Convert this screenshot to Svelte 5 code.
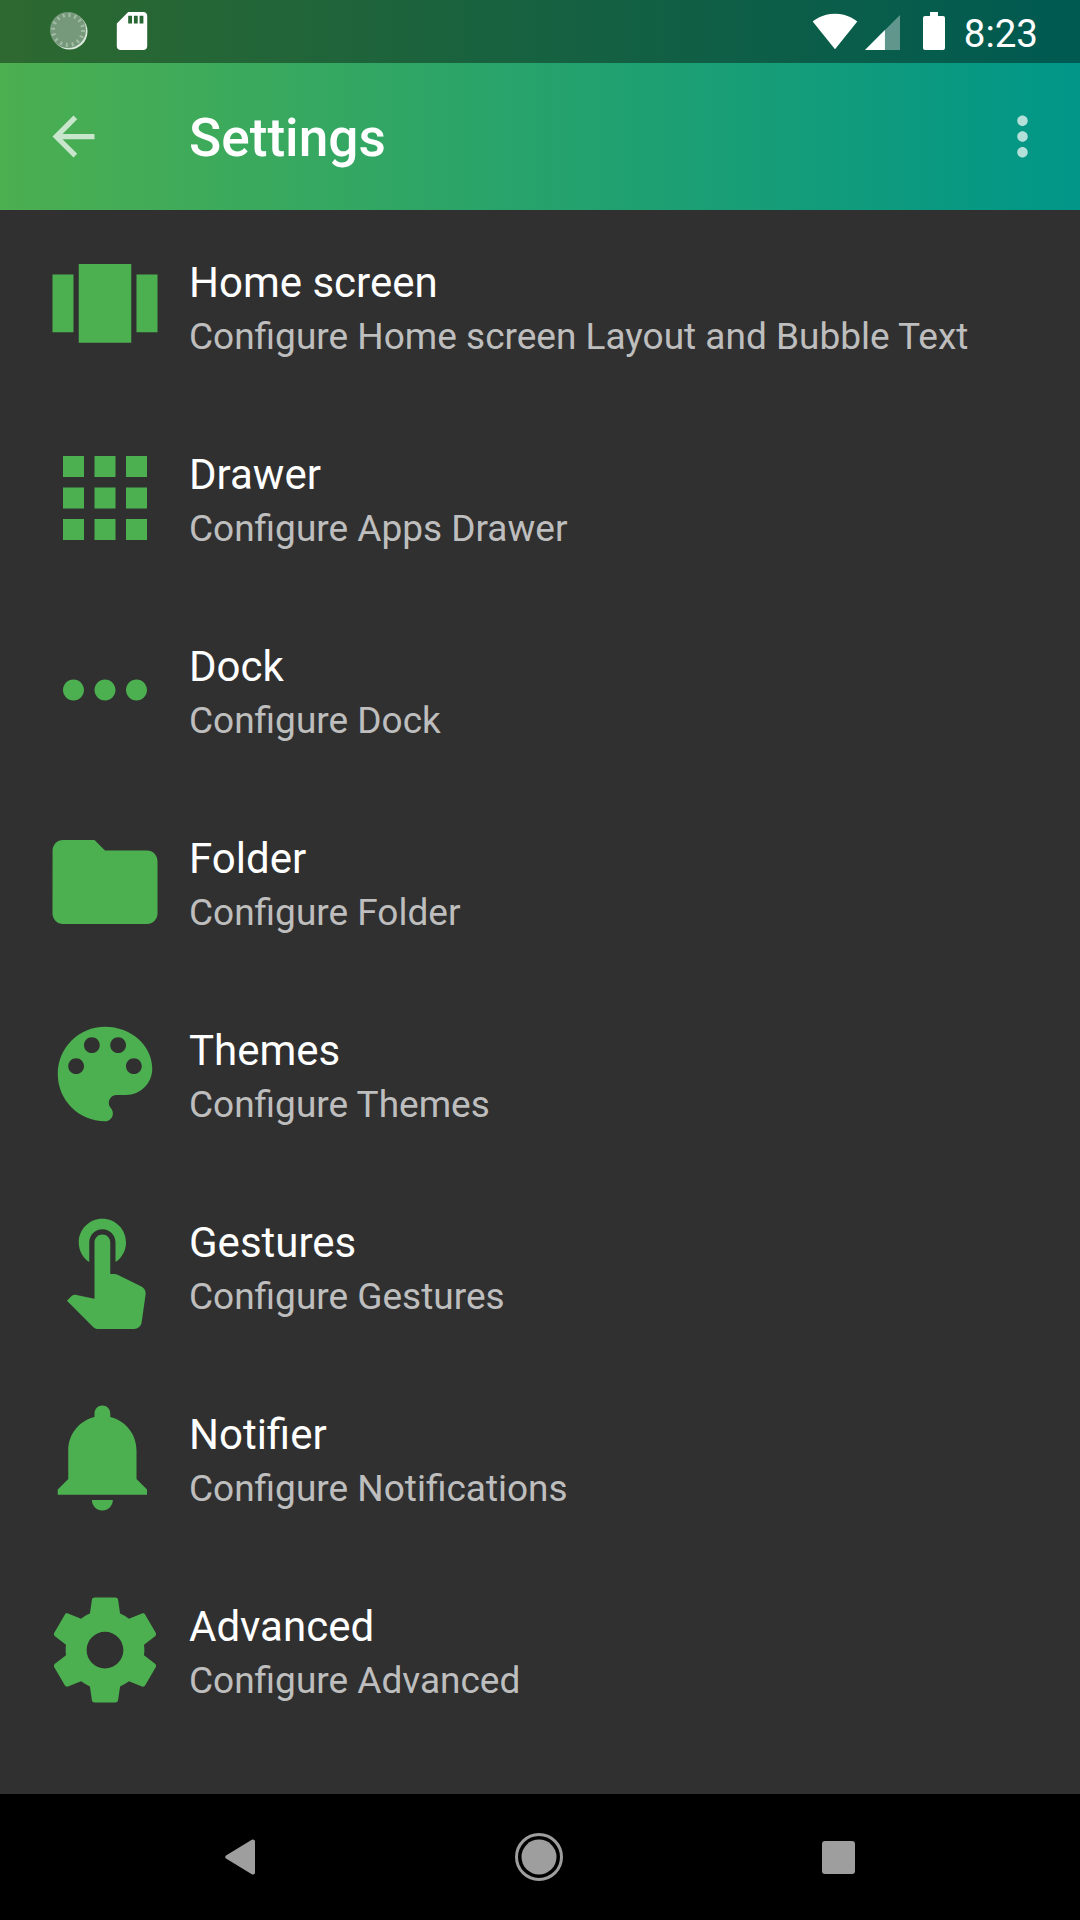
<script>
  const items = [
    { t: 'Home screen', s: 'Configure Home screen Layout and Bubble Text', d: 'M7 19h10V4H7v15zm-5-2h4V6H2v11zM18 6v11h4V6h-4z' },
    { t: 'Drawer', s: 'Configure Apps Drawer', d: 'M4 8h4V4H4v4zm6 12h4v-4h-4v4zm-6 0h4v-4H4v4zm0-6h4v-4H4v4zm6 0h4v-4h-4v4zm6-10v4h4V4h-4zm-6 4h4V4h-4v4zm6 6h4v-4h-4v4zm0 6h4v-4h-4v4z' },
    { t: 'Dock', s: 'Configure Dock', d: 'M6 10c-1.1 0-2 .9-2 2s.9 2 2 2 2-.9 2-2-.9-2-2-2zm12 0c-1.1 0-2 .9-2 2s.9 2 2 2 2-.9 2-2-.9-2-2-2zm-6 0c-1.1 0-2 .9-2 2s.9 2 2 2 2-.9 2-2-.9-2-2-2z' },
    { t: 'Folder', s: 'Configure Folder', d: 'M10 4H4c-1.1 0-1.99.9-1.99 2L2 18c0 1.1.9 2 2 2h16c1.1 0 2-.9 2-2V8c0-1.1-.9-2-2-2h-8l-2-2z' },
    { t: 'Themes', s: 'Configure Themes', d: 'M12 3c-4.97 0-9 4.03-9 9s4.03 9 9 9c.83 0 1.5-.67 1.5-1.5 0-.39-.15-.74-.39-1.01-.23-.26-.38-.61-.38-.99 0-.83.67-1.5 1.5-1.5H16c2.76 0 5-2.24 5-5 0-4.42-4.03-8-9-8zm-5.5 9c-.83 0-1.5-.67-1.5-1.5S5.67 9 6.5 9 8 9.67 8 10.5 7.33 12 6.5 12zm3-4C8.67 8 8 7.33 8 6.5S8.67 5 9.5 5s1.5.67 1.5 1.5S10.33 8 9.5 8zm5 0c-.83 0-1.5-.67-1.5-1.5S13.67 5 14.5 5s1.5.67 1.5 1.5S15.33 8 14.5 8zm3 4c-.83 0-1.5-.67-1.5-1.5S16.67 9 17.5 9s1.5.67 1.5 1.5-.67 1.5-1.5 1.5z' },
    { t: 'Gestures', s: 'Configure Gestures', d: 'M9 11.24V7.5C9 6.12 10.12 5 11.5 5S14 6.12 14 7.5v3.74c1.21-.81 2-2.18 2-3.74C16 5.01 13.99 3 11.5 3S7 5.01 7 7.5c0 1.56.79 2.93 2 3.74zm9.84 4.63l-4.54-2.26c-.17-.07-.35-.11-.54-.11H13v-6c0-.83-.67-1.5-1.5-1.5S10 6.67 10 7.5v10.74l-3.43-.72c-.08-.01-.15-.03-.24-.03-.31 0-.59.13-.79.33l-.79.8 4.94 4.94c.27.27.65.44 1.06.44h6.79c.75 0 1.33-.55 1.44-1.28l.75-5.27c.01-.07.02-.14.02-.2 0-.62-.38-1.16-.91-1.38z' },
    { t: 'Notifier', s: 'Configure Notifications', d: 'M11.5 22c1.1 0 2-.9 2-2h-4c0 1.1.9 2 2 2zm6.5-6v-5.5c0-3.07-2.13-5.64-5-6.32V3.5c0-.83-.67-1.5-1.5-1.5S10 2.67 10 3.5v.68c-2.87.68-5 3.25-5 6.32V16l-2 2v1h17v-1l-2-2z' },
    { t: 'Advanced', s: 'Configure Advanced', d: 'M19.43 12.98c.04-.32.07-.64.07-.98s-.03-.66-.07-.98l2.11-1.65c.19-.15.24-.42.12-.64l-2-3.46c-.12-.22-.39-.3-.61-.22l-2.49 1c-.52-.4-1.08-.73-1.69-.98l-.38-2.65C14.46 2.18 14.25 2 14 2h-4c-.25 0-.46.18-.49.42l-.38 2.65c-.61.25-1.17.59-1.69.98l-2.49-1c-.23-.09-.49 0-.61.22l-2 3.46c-.13.22-.07.49.12.64l2.11 1.65c-.04.32-.07.65-.07.98s.03.66.07.98l-2.11 1.65c-.19.15-.24.42-.12.64l2 3.46c.12.22.39.3.61.22l2.49-1c.52.4 1.08.73 1.69.98l.38 2.65c.03.24.24.42.49.42h4c.25 0 .46-.18.49-.42l.38-2.65c.61-.25 1.17-.59 1.69-.98l2.49 1c.23.09.49 0 .61-.22l2-3.46c.12-.22.07-.49-.12-.64l-2.11-1.65zM12 15.5c-1.93 0-3.5-1.57-3.5-3.5s1.57-3.5 3.5-3.5 3.5 1.57 3.5 3.5-1.57 3.5-3.5 3.5z' }
  ];
</script>

<div class="screen">
  <header class="head">
    <div class="status">
      <svg class="spin" viewBox="0 0 38 38" width="38" height="38">
        <circle cx="19.5" cy="19.5" r="18" fill="#dbe8dc" />
        <circle cx="18" cy="18" r="18" fill="#75997a" />
        <circle cx="18" cy="18" r="15" fill="none" stroke="#a3bca6" stroke-width="4" stroke-dasharray="2 3.9" />
      </svg>
      <svg class="sd" viewBox="4 2 16 20" width="32" height="38"><path fill="#fff" d="M18 2h-8L4.02 8 4 20c0 1.1.9 2 2 2h12c1.1 0 2-.9 2-2V4c0-1.1-.9-2-2-2zm-6 6h-2V4h2v4zm3 0h-2V4h2v4zm3 0h-2V4h2v4z" /></svg>
      <span class="grow"></span>
      <svg class="wifi" viewBox="0 3 24 18.5" width="46" height="37"><path fill="#fff" d="M12.01 21.49L23.64 7c-.45-.34-4.93-4-11.64-4C5.28 3 .81 6.66.36 7l11.64 14.5.01-.01z" /></svg>
      <svg class="signal" viewBox="2 2 20 20" width="35" height="35">
        <path fill="#fff" fill-opacity=".36" d="M2 22h20V2z" />
        <path fill="#fff" d="M2 22h11.4V10.6z" />
      </svg>
      <svg class="batt" viewBox="0 0 22 38" width="22" height="38"><path fill="#fff" d="M7 0h8v4h5a2 2 0 0 1 2 2v30a2 2 0 0 1-2 2H2a2 2 0 0 1-2-2V6a2 2 0 0 1 2-2h5z" /></svg>
      <span class="time">8:23</span>
    </div>
    <div class="toolbar">
      <svg class="back" viewBox="0 0 24 24" width="63" height="63"><path fill="#fff" d="M20 11H7.83l5.59-5.59L12 4l-8 8 8 8 1.41-1.41L7.83 13H20v-2z" /></svg>
      <h1>Settings</h1>
      <svg class="more" viewBox="0 0 24 24" width="63" height="63"><path fill="#fff" d="M12 8c1.1 0 2-.9 2-2s-.9-2-2-2-2 .9-2 2 .9 2 2 2zm0 2c-1.1 0-2 .9-2 2s.9 2 2 2 2-.9 2-2-.9-2-2-2zm0 6c-1.1 0-2 .9-2 2s.9 2 2 2 2-.9 2-2-.9-2-2-2z" /></svg>
    </div>
  </header>

  <main class="list">
    {#each items as it}
      <div class="row">
        <svg class="icon" viewBox="0 0 24 24" width="126" height="126"><path d={it.d} /></svg>
        <div class="txt">
          <div class="title">{it.t}</div>
          <div class="sub">{it.s}</div>
        </div>
      </div>
    {/each}
  </main>

  <nav class="nav">
    <svg viewBox="0 0 30 36" width="30" height="36"><path fill="#9e9e9e" d="M28 0.4a2 2 0 0 1 2 1.6v32a2 2 0 0 1-2 1.6 2 2 0 0 1-1.2-.4L1 19.6a2 2 0 0 1 0-3.2L26.8.8a2 2 0 0 1 1.2-.4z" /></svg>
    <svg viewBox="0 0 48 48" width="48" height="48">
      <circle cx="24" cy="24" r="22.5" fill="none" stroke="#9e9e9e" stroke-width="3" />
      <circle cx="24" cy="24" r="17.5" fill="#9e9e9e" />
    </svg>
    <span class="rec"></span>
  </nav>
</div>

<style>
  :global(body) { margin: 0; background: #303030; }
  .screen {
    width: 1080px;
    height: 1920px;
    display: flex;
    flex-direction: column;
    background: #303030;
    font-family: Roboto, sans-serif;
    overflow: hidden;
  }
  .head { background: linear-gradient(90deg, #4caf50, #009688); }
  .status {
    height: 63px;
    display: flex;
    align-items: center;
    background: rgba(0, 0, 0, 0.4);
    padding: 0 42px 0 50px;
    box-sizing: border-box;
  }
  .spin { margin-top: -1px; }
  .sd { margin-left: 28px; margin-top: -1px; }
  .grow { flex: 1; }
  .wifi { margin-top: -1px; }
  .signal { margin-left: 7px; margin-top: 2px; }
  .batt { margin-left: 23px; margin-top: -1px; }
  .time {
    margin-left: 19px;
    color: #fff;
    font-size: 38.5px;
    line-height: 63px;
    padding-top: 4px;
  }
  .toolbar {
    height: 147px;
    display: flex;
    align-items: center;
    padding: 0 26px 0 42px;
  }
  .back, .more { opacity: 0.7; flex: none; }
  h1 {
    margin: 5px 0 0 84px;
    flex: 1;
    color: #fff;
    font-size: 53.2px;
    font-weight: 500;
    line-height: 1;
  }
  .list { flex: 1; }
  .row {
    height: 192px;
    display: flex;
    align-items: center;
    padding-left: 42px;
  }
  .icon { fill: #4caf50; flex: none; }
  .txt { margin-left: 21px; padding-top: 8px; }
  .title { color: #fff; font-size: 42px; line-height: 54px; }
  .sub { color: rgba(255, 255, 255, 0.7); font-size: 37px; line-height: 54px; }
  .nav {
    height: 126px;
    flex: none;
    background: #000;
    display: grid;
    grid-template-columns: 30px 48px 33px;
    justify-content: space-between;
    align-items: center;
    padding: 0 225px 0 225px;
  }
  .rec {
    width: 33px;
    height: 33px;
    background: #9e9e9e;
    border-radius: 3px;
  }
</style>
